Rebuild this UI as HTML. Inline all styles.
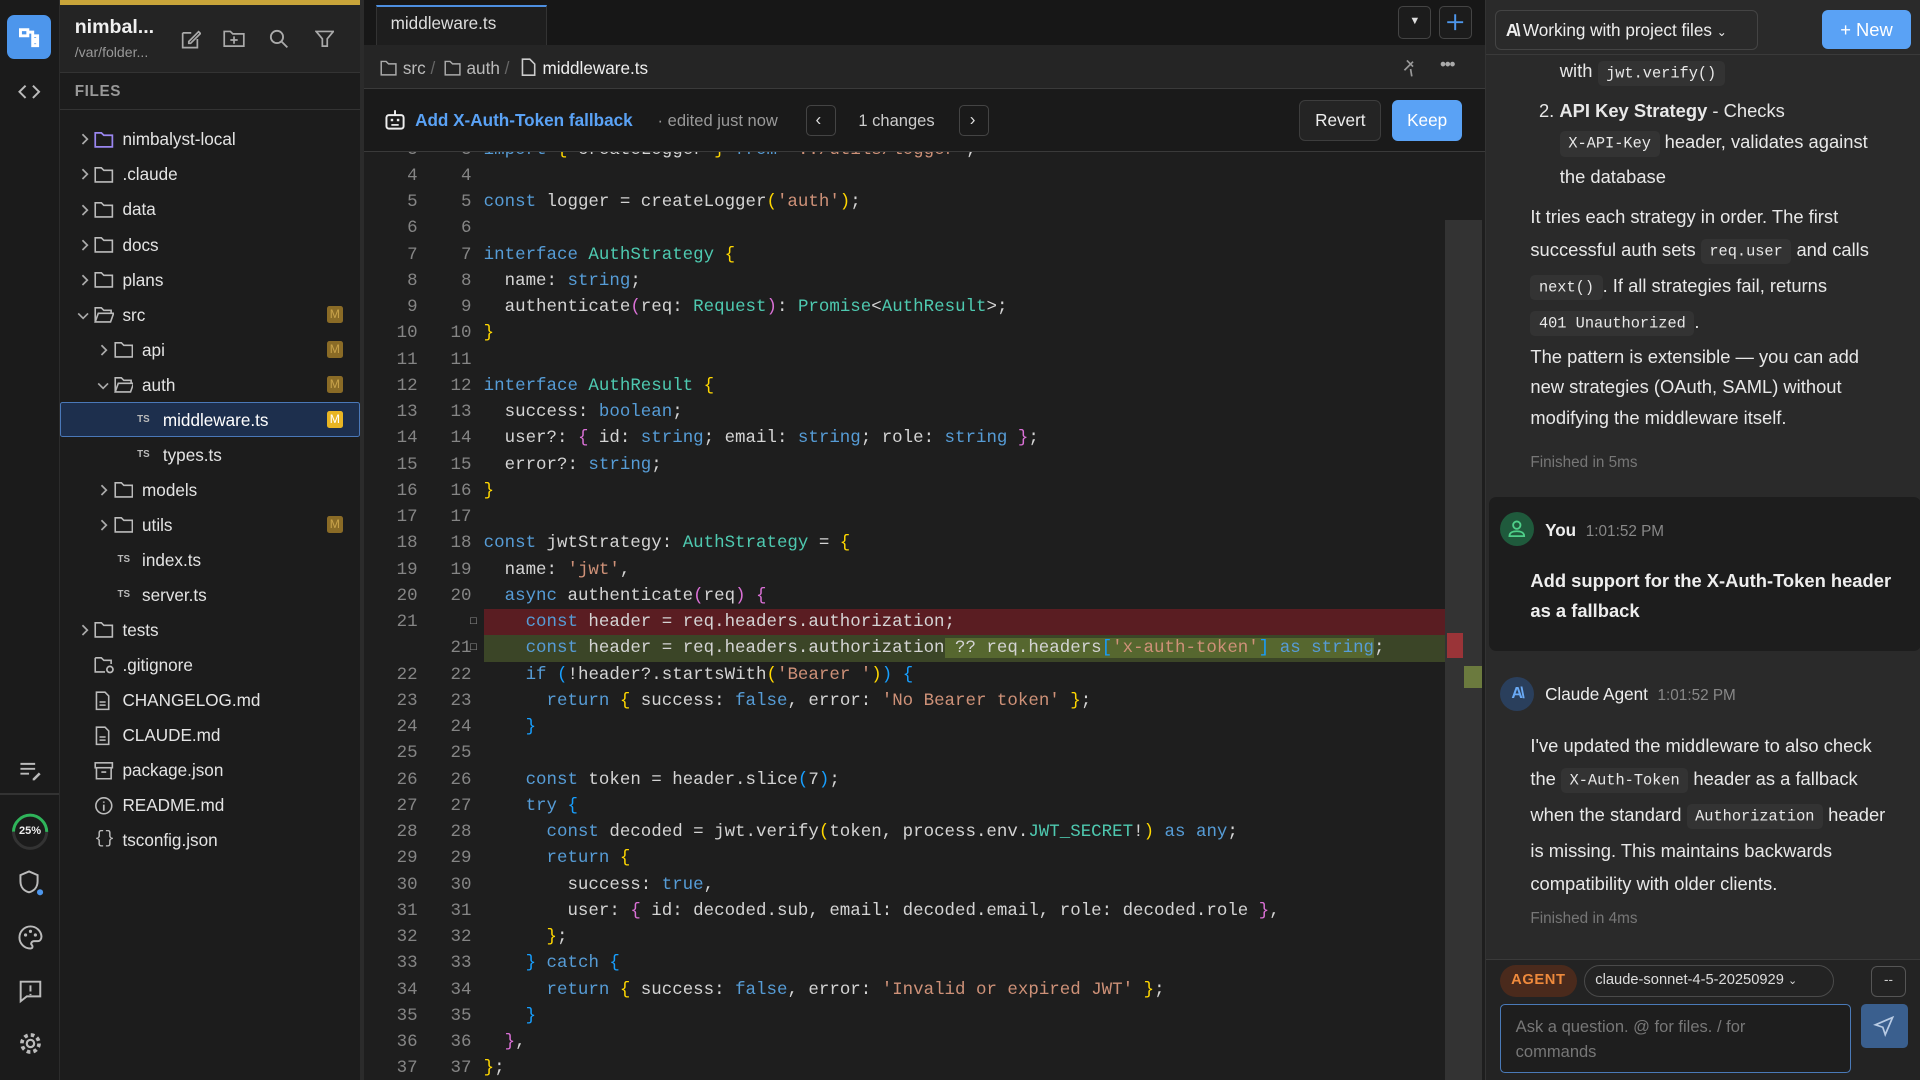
<!DOCTYPE html>
<html><head><meta charset="utf-8"><style>
*{box-sizing:border-box;margin:0;padding:0}
html,body{width:1920px;height:1080px;overflow:hidden;background:#1a1a1a}
#w{zoom:1.2244898;width:1568px;height:882px;position:relative;font-family:"Liberation Sans",sans-serif;color:#e6e6e6;overflow:hidden}
.a{position:absolute}
.rail{left:0;top:0;width:49px;height:882px;background:#1b1b1b;border-right:1px solid #2c2c2c}
.side{left:49px;top:0;width:245px;height:882px;background:#1c1c1c}
.row{position:absolute;left:0;width:245px;height:28px;font-size:14px;line-height:28px;color:#e4e4e4}
.row span{position:absolute}
.m{position:absolute;left:218px;top:7px;width:13px;height:14px;background:#8a6b26;color:#c8a24a;font-size:10px;line-height:14px;text-align:center;border-radius:2px}
svg{display:block}
.ic{position:absolute}
.ed{left:297px;top:0;width:916px;height:882px;background:#1e1e1e}
.code{position:absolute;left:0;top:124px;width:916px;height:758px;overflow:hidden}
.ln{position:absolute;left:0;height:21.44px;width:870px;font-family:"Liberation Mono",monospace;font-size:14.26px;line-height:21.44px;white-space:pre;color:#d4d4d4}
.n1,.n2{position:absolute;width:30px;text-align:right;color:#858585}
.n1{left:14px}.n2{left:58px}
.tx{position:absolute;left:98px}
.k{color:#569cd6}.t{color:#4ec9b0}.s{color:#ce9178}.y{color:#ffd700}.p{color:#da70d6}.bb{color:#179fff}
.chat{left:1213px;top:0;width:355px;height:882px;background:#2a2a2a;border-left:1px solid #333}
.ct{font-size:15px;color:#e8e8e8;line-height:25px}
code{font-family:"Liberation Mono",monospace;font-size:12.5px;background:#333;padding:3px 7px;border-radius:4px;color:#e8e8e8}
.btn{position:absolute;border:1px solid #444;border-radius:4px}
</style></head><body><div id="w">

<!-- rail -->
<div class="a rail">
 <div class="a" style="left:6px;top:12px;width:36px;height:36px;background:#4d96ec;border-radius:6px">
  <svg width="36" height="36"><path d="M11 12h6v5h-6zM17 14h4v8h4v3h-4v-3M20 17h5v3h-5" fill="none" stroke="#fff" stroke-width="2.4"/></svg></div>
 <svg class="ic" style="left:14px;top:67px" width="20" height="16"><path d="M7 3L2 8l5 5M13 3l5 5-5 5" fill="none" stroke="#bbb" stroke-width="1.6"/></svg>
 <svg class="ic" style="left:15px;top:620px" width="20" height="18"><path d="M2 4h12M2 8h12M2 12h7" stroke="#bbb" stroke-width="1.6"/><path d="M12 16l5-5 1.5 1.5-5 5H12z" fill="#bbb"/></svg>
 <div class="a" style="left:0;top:648px;width:48px;height:1px;background:#333"></div>
 <div class="a" style="left:10px;top:665px;width:29px;height:29px;border-radius:50%;border:3px solid #333;border-top-color:#2fb45a;border-right-color:#2fb45a;transform:rotate(-45deg)"></div>
 <div class="a" style="left:10px;top:674px;width:29px;text-align:center;font-size:9px;font-weight:bold;color:#eee">25%</div>
 <svg class="ic" style="left:15px;top:710px" width="22" height="22"><path d="M9 2l7 3v5c0 5-3 8-7 9-4-1-7-4-7-9V5z" fill="none" stroke="#bbb" stroke-width="1.6"/><circle cx="18" cy="19" r="2.5" fill="#4d96ec"/></svg>
 <svg class="ic" style="left:14px;top:755px" width="22" height="22"><path d="M11 2a9 9 0 1 0 0 18c2 0 2-2 1-3s0-3 2-3h3c2 0 3-2 3-4A9 9 0 0 0 11 2z" fill="none" stroke="#bbb" stroke-width="1.6"/><circle cx="7" cy="9" r="1.3" fill="#bbb"/><circle cx="11" cy="6" r="1.3" fill="#bbb"/><circle cx="15" cy="9" r="1.3" fill="#bbb"/></svg>
 <svg class="ic" style="left:14px;top:799px" width="22" height="22"><path d="M3 3h16v12H8l-5 4z" fill="none" stroke="#bbb" stroke-width="1.6"/><path d="M11 6v5M11 13v1" stroke="#bbb" stroke-width="1.6"/></svg>
 <svg class="ic" style="left:14px;top:841px" width="22" height="22"><circle cx="11" cy="11" r="3" fill="none" stroke="#bbb" stroke-width="1.8"/><circle cx="11" cy="11" r="7" fill="none" stroke="#bbb" stroke-width="3" stroke-dasharray="3 2.5"/></svg>
</div>

<!-- sidebar -->
<div class="a side">
 <div class="a" style="left:0;top:0;width:245px;height:60px;background:#242424;border-bottom:1px solid #333"></div>
 <div class="a" style="left:0;top:0;width:245px;height:4px;background:#c9a53a"></div>
 <div class="a" style="left:12px;top:13px;font-size:16px;font-weight:bold;color:#f0f0f0">nimbal...</div>
 <div class="a" style="left:12px;top:36px;font-size:11.5px;color:#999">/var/folder...</div>
 <svg class="ic" style="left:97px;top:23px" width="18" height="18"><path d="M3 4h7M3 4v12h12V9M8 11l8-8 1.5 1.5-8 8H8z" fill="none" stroke="#aaa" stroke-width="1.4"/></svg>
 <svg class="ic" style="left:133px;top:24px" width="18" height="16"><path d="M1 2h5l2 2h9v10H1z" fill="none" stroke="#aaa" stroke-width="1.4"/><path d="M9 6v6M6 9h6" stroke="#aaa" stroke-width="1.4"/></svg>
 <svg class="ic" style="left:171px;top:24px" width="16" height="16"><circle cx="6.5" cy="6.5" r="5" fill="none" stroke="#aaa" stroke-width="1.5"/><path d="M10 10l5 5" stroke="#aaa" stroke-width="1.5"/></svg>
 <svg class="ic" style="left:208px;top:24px" width="16" height="16"><path d="M1 2h14l-5 6v6H6V8z" fill="none" stroke="#aaa" stroke-width="1.4"/></svg>
 <div class="a" style="left:0;top:60px;width:245px;height:30px;border-bottom:1px solid #333"></div>
 <div class="a" style="left:12px;top:68px;font-size:12.5px;font-weight:bold;color:#999;letter-spacing:.5px">FILES</div>

 <div class="a" style="left:0;top:328px;width:245px;height:29px;background:#1d2f4d;border:1px solid #4a78b8;border-radius:2px"></div>
 <div id="tree"></div>
</div>

<!-- divider -->
<div class="a" style="left:294px;top:0;width:3px;height:882px;background:#2b2b2b"></div>

<!-- editor -->
<div class="a ed">
 <div class="a" style="left:0;top:0;width:916px;height:37px;background:#171717"></div>
 <div class="a" style="left:10px;top:4px;width:140px;height:33px;background:#1e1e1e;border:1px solid #333;border-bottom:none;border-top:2px solid #4d8fe0"></div>
 <div class="a" style="left:22px;top:11px;font-size:14px;color:#ddd">middleware.ts</div>
 <div class="btn" style="left:845px;top:5px;width:27px;height:27px;background:#1c1c1c"></div>
 <div class="a" style="left:854px;top:12px;font-size:9px;color:#ddd">▼</div>
 <div class="btn" style="left:878px;top:5px;width:27px;height:27px;background:#1c1c1c"></div>
 <svg class="ic" style="left:884px;top:11px" width="15" height="15"><path d="M7.5 1v13M1 7.5h13" stroke="#4d96ec" stroke-width="1.6"/></svg>
 <div class="a" style="left:0;top:37px;width:916px;height:36px;background:#252525;border-bottom:1px solid #3a3a3a"></div>
 <svg class="ic" style="left:13px;top:48px" width="14" height="14"><path d="M1 2h4l2 2h6v9H1z" fill="none" stroke="#aaa" stroke-width="1.2"/></svg>
 <div class="a" style="left:32px;top:47px;font-size:14px;color:#bbb">src <span style="color:#666">/</span></div>
 <svg class="ic" style="left:66px;top:48px" width="14" height="14"><path d="M1 2h4l2 2h6v9H1z" fill="none" stroke="#aaa" stroke-width="1.2"/></svg>
 <div class="a" style="left:84px;top:47px;font-size:14px;color:#bbb">auth <span style="color:#666">/</span></div>
 <svg class="ic" style="left:128px;top:47px" width="13" height="15"><path d="M2 1h6l4 4v9H2z" fill="none" stroke="#ccc" stroke-width="1.3"/></svg>
 <div class="a" style="left:146px;top:47px;font-size:14px;color:#eee">middleware.ts</div>
 <svg class="ic" style="left:848px;top:47px" width="14" height="16"><path d="M4 2l5 5M9 3l-7 7M7 9l1 6" stroke="#999" stroke-width="1.4"/></svg>
 <div class="a" style="left:879px;top:44px;font-size:14px;color:#aaa;letter-spacing:-1px">•••</div>

 <div class="a" style="left:0;top:73px;width:916px;height:51px;background:#1a1a1a;border-bottom:1px solid #3a3a3a;z-index:3">
  <svg class="ic" style="left:17px;top:16px" width="18" height="18"><rect x="2" y="5" width="14" height="11" rx="2" fill="none" stroke="#eee" stroke-width="1.6"/><path d="M9 1v4" stroke="#eee" stroke-width="1.6"/><rect x="5.5" y="8" width="2" height="2" fill="#eee"/><rect x="10.5" y="8" width="2" height="2" fill="#eee"/><path d="M6 13h6" stroke="#eee" stroke-width="1.4"/></svg>
  <div class="a" style="left:42px;top:17px;font-size:14px;font-weight:bold;color:#5aa2f5">Add X-Auth-Token fallback</div>
  <div class="a" style="left:240px;top:18px;font-size:13.5px;color:#999">· edited just now</div>
  <div class="btn" style="left:361px;top:13px;width:25px;height:25px"></div>
  <div class="a" style="left:369px;top:16px;font-size:14px;color:#ddd">‹</div>
  <div class="a" style="left:404px;top:18px;font-size:13.5px;color:#ccc">1 changes</div>
  <div class="btn" style="left:486px;top:13px;width:25px;height:25px"></div>
  <div class="a" style="left:495px;top:16px;font-size:14px;color:#ddd">›</div>
  <div class="btn" style="left:764px;top:9px;width:67px;height:33px;background:#242424;border-color:#3d3d3d;border-radius:5px"></div>
  <div class="a" style="left:777px;top:17px;font-size:14px;color:#eee">Revert</div>
  <div class="a" style="left:840px;top:9px;width:57px;height:33px;background:#5aa2f5;border-radius:5px;text-align:center;line-height:33px;font-size:14px;color:#fff">Keep</div>
 </div>

 <div class="code" id="code">
  <div class="a" style="left:883px;top:56px;width:30px;height:702px;background:#333"></div>
  <div class="a" style="left:885px;top:393px;width:13px;height:20px;background:#9a3438"></div>
  <div class="a" style="left:899px;top:420px;width:14px;height:18px;background:#6b7a3e"></div>
 </div>
</div>

<!-- chat -->
<div class="a chat">
 <div class="a" style="left:0;top:0;width:355px;height:45px;border-bottom:1px solid #3a3a3a"></div>
 <div class="btn" style="left:7px;top:8px;width:215px;height:33px;border-color:#444;border-radius:5px"></div>
 <div class="a" style="left:16px;top:16px;font-size:14px;color:#eee"><b style="letter-spacing:-2px">A\</b> Working with project files <span style="font-size:10px">⌄</span></div>
 <div class="a" style="left:274px;top:8px;width:73px;height:32px;background:#5aa2f5;border-radius:5px;color:#fff;font-size:15px;line-height:32px;text-align:center">+ New</div>

 <div class="a ct" style="left:60px;top:46px;width:290px">with <code>jwt.verify()</code></div>
 <div class="a ct" style="left:43px;top:78px;width:300px">2. <b>API Key Strategy</b> - Checks</div>
 <div class="a ct" style="left:60px;top:103px;width:272px;line-height:26px"><code>X-API-Key</code> header, validates against the database</div>
 <div class="a ct" style="left:36px;top:163px;width:296px;line-height:27px">It tries each strategy in order. The first successful auth sets <code>req.user</code> and calls <code>next()</code>. If all strategies fail, returns <code>401&nbsp;Unauthorized</code>.</div>
 <div class="a ct" style="left:36px;top:279px;width:290px">The pattern is extensible — you can add new strategies (OAuth, SAML) without modifying the middleware itself.</div>
 <div class="a" style="left:36px;top:371px;font-size:12.5px;color:#777">Finished in 5ms</div>

 <div class="a" style="left:2px;top:406px;width:353px;height:126px;background:#1d1d1d;border-radius:6px"></div>
 <div class="a" style="left:11px;top:418px;width:28px;height:28px;border-radius:50%;background:#1f5a3c"></div>
 <svg class="ic" style="left:17px;top:424px" width="16" height="16"><circle cx="8" cy="5" r="3" fill="none" stroke="#4fd08a" stroke-width="1.5"/><path d="M2 14c0-3 3-4 6-4s6 1 6 4z" fill="none" stroke="#4fd08a" stroke-width="1.5"/></svg>
 <div class="a" style="left:48px;top:425px;font-size:14px;font-weight:bold;color:#eee">You <span style="font-weight:normal;font-size:12.5px;color:#888;margin-left:4px">1:01:52 PM</span></div>
 <div class="a ct" style="left:36px;top:462px;width:312px;font-weight:bold;color:#eee">Add support for the X-Auth-Token header as a fallback</div>

 <div class="a" style="left:11px;top:553px;width:28px;height:28px;border-radius:50%;background:#2a3f5c;color:#6aaaf5;font-weight:bold;font-size:13px;line-height:28px;text-align:center;letter-spacing:-2px">A\</div>
 <div class="a" style="left:48px;top:559px;font-size:14px;color:#eee">Claude Agent <span style="font-size:12.5px;color:#888;margin-left:4px">1:01:52 PM</span></div>
 <div class="a ct" style="left:36px;top:595px;width:300px;line-height:27px">I've updated the middleware to also check the <code>X-Auth-Token</code> header as a fallback when the standard <code>Authorization</code> header is missing. This maintains backwards compatibility with older clients.</div>
 <div class="a" style="left:36px;top:743px;font-size:12.5px;color:#777">Finished in 4ms</div>

 <div class="a" style="left:0;top:783px;width:355px;height:99px;background:#232323;border-top:1px solid #3a3a3a"></div>
 <div class="a" style="left:11px;top:788px;width:63px;height:26px;border-radius:13px;background:#4a2a1c;color:#ef8a3c;font-size:12px;font-weight:bold;line-height:26px;text-align:center;letter-spacing:.5px">AGENT</div>
 <div class="btn" style="left:80px;top:788px;width:204px;height:26px;border-radius:13px;border-color:#4a4a4a"></div>
 <div class="a" style="left:89px;top:794px;font-size:12px;color:#ddd">claude-sonnet-4-5-20250929 <span style="font-size:9px">⌄</span></div>
 <div class="btn" style="left:314px;top:789px;width:29px;height:25px;border-color:#555;border-radius:5px;text-align:center;font-size:11px;line-height:22px;color:#ccc">--</div>
 <div class="btn" style="left:11px;top:820px;width:287px;height:56px;border-color:#4a7ab8;border-radius:4px;background:#1e1e1e"></div>
 <div class="a" style="left:24px;top:829px;width:230px;font-size:13.5px;line-height:20px;color:#777">Ask a question. @ for files. / for commands</div>
 <div class="a" style="left:306px;top:820px;width:38px;height:36px;background:#3a5f8e;border-radius:4px"></div>
 <svg class="ic" style="left:316px;top:829px" width="18" height="18"><path d="M2 8l14-6-6 14-2-6z" fill="none" stroke="#b8cbe4" stroke-width="1.4"/></svg>
</div>

<script>
const fold='<svg width="16" height="14"><path d="M1 1.5h5l2 2h7v9.5H1z" fill="none" stroke="#bbb" stroke-width="1.3"/></svg>';
const purp='<svg width="16" height="14"><path d="M1 1.5h5l2 2h7v9.5H1z" fill="none" stroke="#9a86f0" stroke-width="1.4"/></svg>';
const open='<svg width="16" height="14"><path d="M1 13V1.5h5l2 2h6v2M1 13l2.5-7H16L13.5 13z" fill="none" stroke="#bbb" stroke-width="1.3"/></svg>';
const doc='<svg width="14" height="16"><path d="M2 1h7l3 3v11H2z" fill="none" stroke="#bbb" stroke-width="1.3"/><path d="M4.5 9h5M4.5 11.5h5" stroke="#bbb" stroke-width="1.2"/></svg>';
const pkg='<svg width="16" height="16"><rect x="1" y="1.5" width="14" height="4" fill="none" stroke="#bbb" stroke-width="1.3"/><path d="M2 5.5v9h12v-9M6 9h4" fill="none" stroke="#bbb" stroke-width="1.3"/></svg>';
const info='<svg width="16" height="16"><circle cx="8" cy="8" r="6.5" fill="none" stroke="#bbb" stroke-width="1.3"/><path d="M8 7v5M8 4.5v1" stroke="#bbb" stroke-width="1.4"/></svg>';
const brace='<span style="font-size:14px;color:#bbb;font-family:Liberation Mono">{}</span>';
const gitf='<svg width="17" height="16"><path d="M1 1.5h5l2 2h6v3M9 13H1V1.5" fill="none" stroke="#bbb" stroke-width="1.3"/><circle cx="13" cy="11" r="2.5" fill="none" stroke="#bbb" stroke-width="1.4"/></svg>';
const chR='<svg width="8" height="10"><path d="M2 1l4 4-4 4" fill="none" stroke="#aaa" stroke-width="1.4"/></svg>';
const chD='<svg width="10" height="8"><path d="M1 2l4 4 4-4" fill="none" stroke="#aaa" stroke-width="1.4"/></svg>';
const ts='<span style="font-size:8px;font-weight:bold;color:#bbb">TS</span>';
const rows=[[0,'r',purp,'nimbalyst-local'],[0,'r',fold,'.claude'],[0,'r',fold,'data'],[0,'r',fold,'docs'],[0,'r',fold,'plans'],
[0,'d',open,'src',1],[1,'r',fold,'api',1],[1,'d',open,'auth',1],[2,'',ts,'middleware.ts',2],[2,'',ts,'types.ts'],
[1,'r',fold,'models'],[1,'r',fold,'utils',1],[1,'',ts,'index.ts'],[1,'',ts,'server.ts'],[0,'r',fold,'tests'],
[0,'',gitf,'.gitignore'],[0,'',doc,'CHANGELOG.md'],[0,'',doc,'CLAUDE.md'],[0,'',pkg,'package.json'],[0,'',info,'README.md'],[0,'',brace,'tsconfig.json']];
let h='';
rows.forEach((r,i)=>{const y=100+i*28.6;const lv=r[0];
 let ix,tx;
 if(r[2]===ts){ix=lv==2?63:47;tx=lv==2?84:67}else{ix=28+lv*16;tx=51+lv*16}
 h+=`<div class="row" style="top:${y}px">`;
 if(r[1])h+=`<span style="left:${(lv?31:15)+(r[1]=='d'?-1:1)}px;top:${r[1]=='d'?11:9}px">${r[1]=='r'?chR:chD}</span>`;
 h+=`<span style="left:${ix}px;top:${r[2]===ts?1:7}px;line-height:${r[2]===ts?26:'14'}px">${r[2]}</span><span style="left:${tx}px;color:${r[4]==2?'#fff':'#e4e4e4'}">${r[3]}</span>`;
 if(r[4])h+=`<div class="m" style="${r[4]==2?'background:#e8b523;color:#fff':''}">M</div>`;
 h+='</div>';});
document.getElementById('tree').innerHTML=h;

const K=s=>`<span class="k">${s}</span>`,T=s=>`<span class="t">${s}</span>`,S=s=>`<span class="s">${s}</span>`,Y=s=>`<span class="y">${s}</span>`,P=s=>`<span class="p">${s}</span>`,B=s=>`<span class="bb">${s}</span>`;
const L=[
[3,3,`${K('import')} ${Y('{')} createLogger ${Y('}')} ${K('from')} ${S("'../utils/logger'")};`],
[4,4,''],
[5,5,`${K('const')} logger = createLogger${Y('(')}${S("'auth'")}${Y(')')};`],
[6,6,''],
[7,7,`${K('interface')} ${T('AuthStrategy')} ${Y('{')}`],
[8,8,`  name: ${K('string')};`],
[9,9,`  authenticate${P('(')}req: ${T('Request')}${P(')')}: ${T('Promise')}&lt;${T('AuthResult')}&gt;;`],
[10,10,Y('}')],
[11,11,''],
[12,12,`${K('interface')} ${T('AuthResult')} ${Y('{')}`],
[13,13,`  success: ${K('boolean')};`],
[14,14,`  user?: ${P('{')} id: ${K('string')}; email: ${K('string')}; role: ${K('string')} ${P('}')};`],
[15,15,`  error?: ${K('string')};`],
[16,16,Y('}')],
[17,17,''],
[18,18,`${K('const')} jwtStrategy: ${T('AuthStrategy')} = ${Y('{')}`],
[19,19,`  name: ${S("'jwt'")},`],
[20,20,`  ${K('async')} authenticate${P('(')}req${P(')')} ${P('{')}`],
[21,'',`    ${K('const')} header = req.headers.authorization;`,'del'],
['',21,`    ${K('const')} header = req.headers.authorization<span style="background:#56672f"> ?? req.headers${B('[')}${S("'x-auth-token'")}${B(']')} ${K('as')} ${K('string')}</span>;`,'add'],
[22,22,`    ${K('if')} ${B('(')}!header?.startsWith${Y('(')}${S("'Bearer '")}${Y(')')}${B(')')} ${B('{')}`],
[23,23,`      ${K('return')} ${Y('{')} success: ${K('false')}, error: ${S("'No Bearer token'")} ${Y('}')};`],
[24,24,`    ${B('}')}`],
[25,25,''],
[26,26,`    ${K('const')} token = header.slice${B('(')}7${B(')')};`],
[27,27,`    ${K('try')} ${B('{')}`],
[28,28,`      ${K('const')} decoded = jwt.verify${Y('(')}token, process.env.${T('JWT_SECRET')}!${Y(')')} ${K('as')} ${K('any')};`],
[29,29,`      ${K('return')} ${Y('{')}`],
[30,30,`        success: ${K('true')},`],
[31,31,`        user: ${P('{')} id: decoded.sub, email: decoded.email, role: decoded.role ${P('}')},`],
[32,32,`      ${Y('}')};`],
[33,33,`    ${B('}')} ${K('catch')} ${B('{')}`],
[34,34,`      ${K('return')} ${Y('{')} success: ${K('false')}, error: ${S("'Invalid or expired JWT'")} ${Y('}')};`],
[35,35,`    ${B('}')}`],
[36,36,`  ${P('}')},`],
[37,37,`${Y('}')};`],
[38,38,'']];
let c='';
L.forEach((l,i)=>{const top=-12.5+i*21.44;let bg='';
 if(l[3]=='del')bg='background:#5a1d22;';if(l[3]=='add')bg='background:#3b4527;';
 c+=`<div class="ln" style="top:${top}px">`;
 if(bg)c+=`<div style="position:absolute;left:98px;top:0;width:785px;height:21.44px;${bg}"></div>`;
 c+=`<span class="n1">${l[0]}</span><span class="n2">${l[1]}</span>`;
 if(l[3])c+=`<span style="position:absolute;left:87px;top:0;font-size:9px;color:#aaa">□</span>`;
 c+=`<span class="tx">${l[2]}</span></div>`;});
document.getElementById('code').insertAdjacentHTML('beforeend',c);
</script>
</div></body></html>
